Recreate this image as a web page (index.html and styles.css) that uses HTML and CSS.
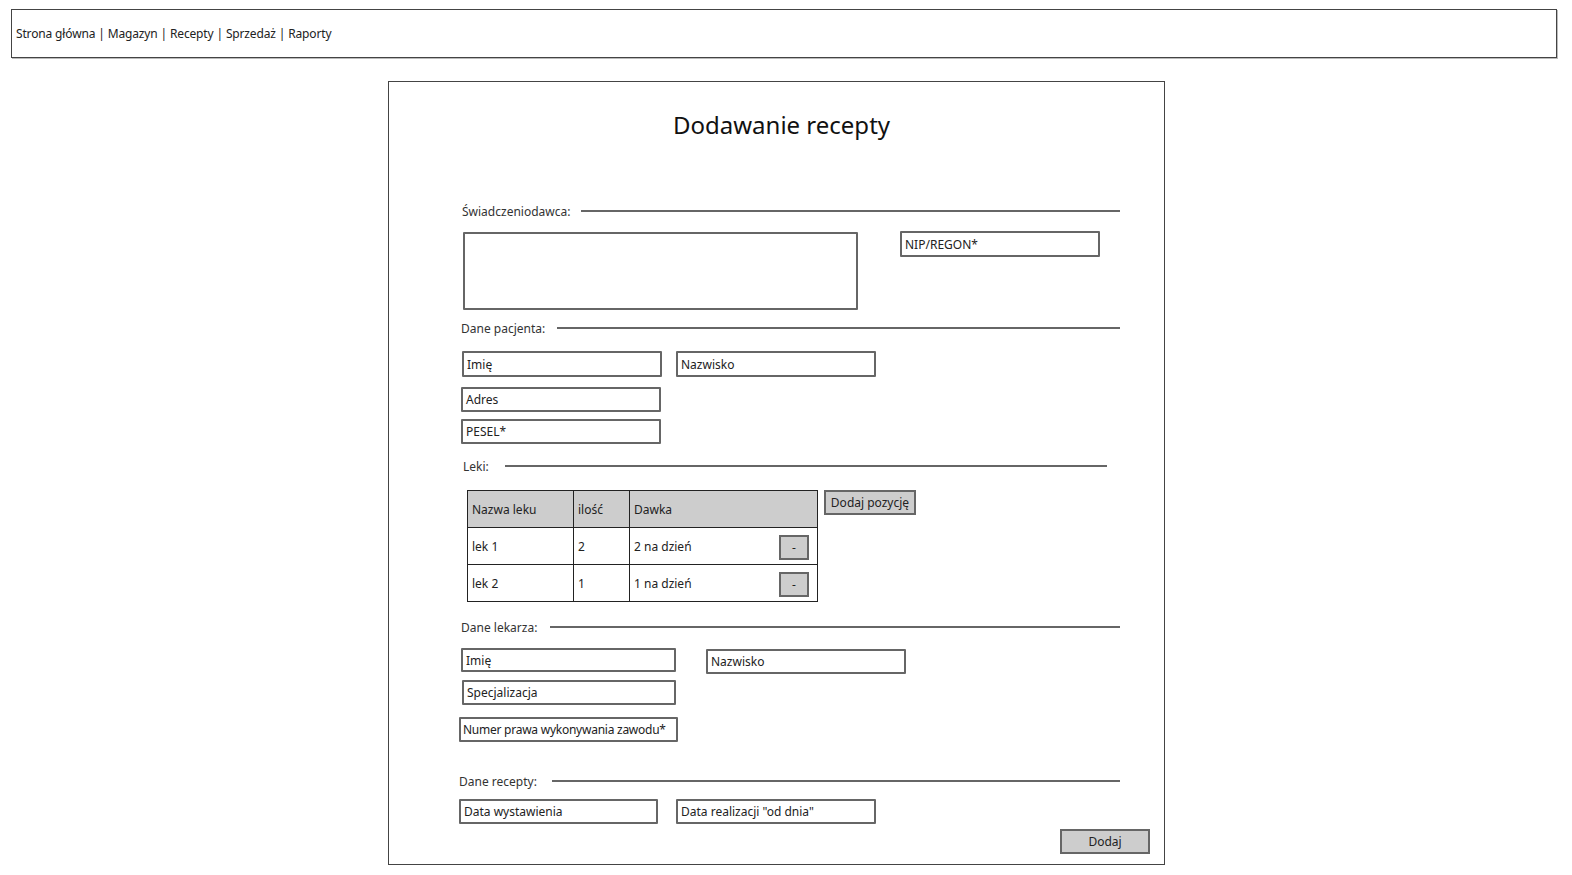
FILE: index.html
```html
<!DOCTYPE html>
<html lang="pl">
<head>
<meta charset="utf-8">
<title>Dodawanie recepty</title>
<link rel="stylesheet" href="styles.css">
</head>
<body>
<nav class="topnav">Strona główna | Magazyn | Recepty | Sprzedaż | Raporty</nav>

<main class="panel">
  <h1 class="title">Dodawanie recepty</h1>

  <div class="sec sec-1"><span class="sec-label">Świadczeniodawca:</span><span class="sec-line"></span></div>
  <div class="row row-provider">
    <div class="box area"></div>
    <div class="box w200 nip">NIP/REGON*</div>
  </div>

  <div class="sec sec-2"><span class="sec-label">Dane pacjenta:</span><span class="sec-line"></span></div>
  <div class="row row-p1">
    <div class="box w200">Imię</div>
    <div class="box w200">Nazwisko</div>
  </div>
  <div class="row row-p2"><div class="box w200">Adres</div></div>
  <div class="row row-p3"><div class="box w200">PESEL*</div></div>

  <div class="sec sec-3"><span class="sec-label">Leki:</span><span class="sec-line"></span></div>
  <div class="row row-meds">
    <table class="meds">
      <thead>
        <tr><th class="c1">Nazwa leku</th><th class="c2">ilość</th><th class="c3">Dawka</th></tr>
      </thead>
      <tbody>
        <tr><td>lek 1</td><td>2</td><td><div class="dose"><span>2 na dzień</span><span class="minus">-</span></div></td></tr>
        <tr><td>lek 2</td><td>1</td><td><div class="dose"><span>1 na dzień</span><span class="minus">-</span></div></td></tr>
      </tbody>
    </table>
    <div class="btn add-pos">Dodaj pozycję</div>
  </div>

  <div class="sec sec-4"><span class="sec-label">Dane lekarza:</span><span class="sec-line"></span></div>
  <div class="row row-d1">
    <div class="box d-imie">Imię</div>
    <div class="box w200 d-nazw">Nazwisko</div>
  </div>
  <div class="row row-d2"><div class="box d-spec">Specjalizacja</div></div>
  <div class="row row-d3"><div class="box d-num">Numer prawa wykonywania zawodu*</div></div>

  <div class="sec sec-5"><span class="sec-label">Dane recepty:</span><span class="sec-line"></span></div>
  <div class="row row-r1">
    <div class="box r-wyst">Data wystawienia</div>
    <div class="box w200">Data realizacji "od dnia"</div>
  </div>
  <div class="row row-submit"><div class="btn submit">Dodaj</div></div>
</main>
</body>
</html>
```

FILE: styles.css
```css
* { box-sizing: border-box; }

body {
  margin: 0;
  background: #fff;
  color: #222;
  font-family: "Comic Sans MS", "Noto Sans", "DejaVu Sans", sans-serif;
  font-size: 12px;
}

.topnav {
  margin: 9px 15px 0 11px;
  height: 49px;
  border: 1px solid #444;
  box-shadow: 1px 1px 0 #bbb;
  padding-left: 4px;
  display: flex;
  align-items: center;
  font-size: 12px;
  letter-spacing: -0.15px;
}

.panel {
  margin: 23px 0 0 388px;
  width: 777px;
  height: 784px;
  border: 1px solid #444;
  padding: 0;
  display: flex;
  flex-direction: column;
}

.title {
  margin: 27px 0 0 10px;
  height: 32px;
  line-height: 32px;
  text-align: center;
  font-weight: normal;
  font-size: 24px;
  color: #111;
}

.sec {
  display: flex;
  align-items: center;
  height: 16px;
  gap: 10px;
}
.sec-label { font-size: 12px; color: #333; white-space: nowrap; }
.sec-line { flex: 1; border-top: 2px solid #666; }

.sec-1 { margin: 62px 44px 0 73px; }
.sec-2 { margin: 10px 44px 0 72px; }
.sec-3 { margin: 14px 57px 0 74px; }
.sec-4 { margin: 17px 44px 0 72px; }
.sec-5 { margin: 31px 44px 0 70px; }

.sec-1 .sec-line { margin-left: 1px; }
.sec-2 .sec-line { margin-left: 2px; }
.sec-3 .sec-line { margin-left: 6px; }
.sec-4 .sec-line { margin-left: 3px; }
.sec-5 .sec-line { margin-left: 5px; }

.row { display: flex; align-items: flex-start; }

.box {
  height: 26px;
  border: 2px solid #666;
  border-radius: 1px;
  padding-left: 3px;
  display: flex;
  align-items: center;
  font-size: 12px;
  color: #222;
  background: #fff;
  white-space: nowrap;
  flex: none;
}
.w200 { width: 200px; }

.row-provider { margin: 12px 0 0 74px; gap: 42px; }
.area { width: 395px; height: 78px; margin-top: 1px; }

.row-p1 { margin: 15px 0 0 73px; gap: 14px; }
.row-p2 { margin: 10px 0 0 72px; }
.row-p2 .box { height: 25px; }
.row-p3 { margin: 7px 0 0 72px; }
.row-p3 .box { height: 25px; }

.row-meds { margin: 16px 0 0 78px; gap: 6px; }

.meds {
  width: 351px;
  border-collapse: collapse;
  font-size: 12px;
  color: #222;
}
.meds th, .meds td {
  border: 1.5px solid #222;
  text-align: left;
  font-weight: normal;
  padding: 0 0 0 4px;
  height: 37px;
}
.meds th { background: #cdcdcd; }
.meds .c1 { width: 106px; }
.meds .c2 { width: 56px; }
.dose { display: flex; align-items: center; justify-content: space-between; padding-right: 8px; }
.minus {
  width: 30px;
  height: 25px;
  background: #cdcdcd;
  border: 2px solid #666;
  display: flex;
  align-items: center;
  justify-content: center;
  margin-top: 2px;
}

.btn {
  height: 25px;
  background: #cdcdcd;
  border: 2px solid #666;
  display: flex;
  align-items: center;
  justify-content: center;
  font-size: 12px;
  color: #222;
  flex: none;
}
.add-pos { width: 92px; }

.row-d1 { margin: 13px 0 0 72px; gap: 30px; }
.d-imie { width: 215px; height: 24px; }
.d-nazw { height: 25px; margin-top: 1px; }
.row-d2 { margin: 6px 0 0 73px; }
.d-spec { width: 214px; height: 25px; }
.row-d3 { margin: 12px 0 0 70px; }
.d-num { width: 219px; height: 25px; letter-spacing: -0.25px; padding-left: 2px; }

.row-r1 { margin: 10px 0 0 70px; gap: 18px; }
.row-r1 .box { height: 25px; }
.r-wyst { width: 199px; }

.row-submit { margin: 5px 0 0 671px; }
.submit { width: 90px; }
```
